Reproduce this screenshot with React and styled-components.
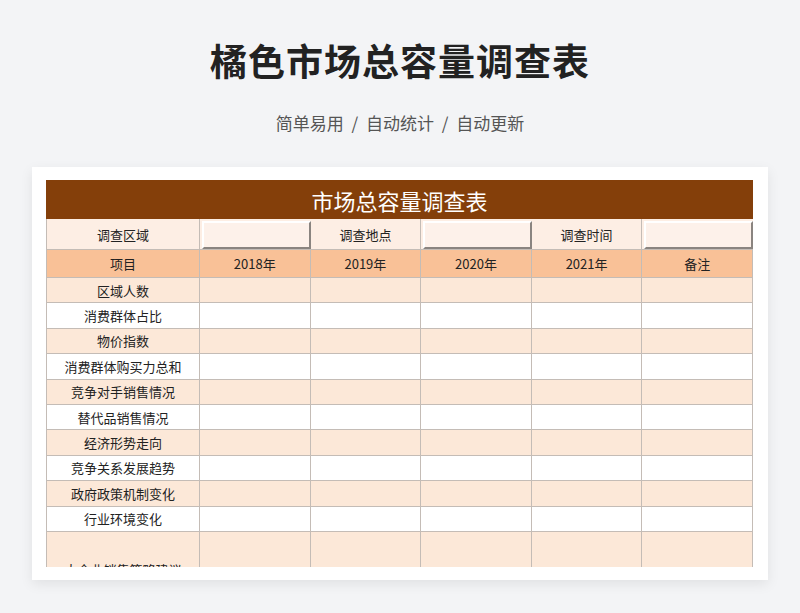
import React from 'react'
import styled, { createGlobalStyle } from 'styled-components'

const Global = createGlobalStyle`
  body { margin: 0; background: #f3f4f6; font-family: "Noto Sans CJK SC", "Noto Sans", sans-serif; }
`

const rows = ['区域人数', '消费群体占比', '物价指数', '消费群体购买力总和', '竞争对手销售情况', '替代品销售情况', '经济形势走向', '竞争关系发展趋势', '政府政策机制变化', '行业环境变化']
const years = ['2018年', '2019年', '2020年', '2021年', '备注']

const App = () => (
  <Page>
    <Global />
    <Title>橘色市场总容量调查表</Title>
    <Sub>简单易用 / 自动统计 / 自动更新</Sub>
    <Card>
      <Sheet>
        <Banner>市场总容量调查表</Banner>
        <Grid>
          <Cell $bg="#fdeee4" $h={30}>调查区域</Cell>
          <Input />
          <Cell $bg="#fdeee4" $h={30}>调查地点</Cell>
          <Input />
          <Cell $bg="#fdeee4" $h={30}>调查时间</Cell>
          <Input />
          <Cell $bg="#f9c197" $h={27}>项目</Cell>
          {years.map(y => <Cell key={y} $bg="#f9c197" $h={27}>{y}</Cell>)}
          {rows.map((r, i) => (
            <React.Fragment key={r}>
              <Cell $bg={i % 2 ? '#fff' : '#fce8d8'}>{r}</Cell>
              {years.map(y => <Cell key={y} $bg={i % 2 ? '#fff' : '#fce8d8'} />)}
            </React.Fragment>
          ))}
          <Cell $bg="#fce8d8" $h={75}>大企业销售策略建议</Cell>
          {years.map(y => <Cell key={y} $bg="#fce8d8" $h={75} />)}
        </Grid>
      </Sheet>
    </Card>
  </Page>
)

const Page = styled.div`
  height: 613px; overflow: hidden;
  display: flex; flex-direction: column; align-items: center;
`
const Title = styled.h1`
  margin: 33px 0 0; font-size: 37px; font-weight: 700; color: #222; letter-spacing: 1px; line-height: 54px;
`
const Sub = styled.div`
  margin-top: 24px; font-size: 17px; color: #555; word-spacing: 4px; line-height: 24px;
`
const Card = styled.div`
  margin-top: 32px; width: 736px; height: 413px; background: #fff;
  box-shadow: 0 4px 12px rgba(0,0,0,0.08);
  padding: 13px 14px 0; box-sizing: border-box;
`
const Sheet = styled.div`
  height: 387px; overflow: hidden; width: 707px;
`
const Banner = styled.div`
  height: 39px; background: #843f0a; color: #fff; font-size: 22px;
  display: flex; align-items: center; justify-content: center;
`
const Grid = styled.div`
  display: grid; grid-template-columns: 153px repeat(5, 1fr);
  border-left: 1px solid #c4bcb6;
`
const Cell = styled.div`
  height: ${p => p.$h || 24.4}px; background: ${p => p.$bg};
  border-right: 1px solid #c4bcb6; border-bottom: 1px solid #c4bcb6;
  display: flex; align-items: center; justify-content: center;
  font-size: 13px; color: #222;
`
const Input = styled.div`
  height: 31px; background: #fdeee4; border-bottom: 1px solid #c4bcb6;
  box-sizing: border-box; padding: 2px 0 2px 2px;
  &::after {
    content: ''; display: block; height: 24px; background: #fdf1ea;
    border-top: 2px solid #fff; border-left: 2px solid #fff;
    border-right: 2px solid #8a8480; border-bottom: 2px solid #8a8480;
  }
`

export default App
